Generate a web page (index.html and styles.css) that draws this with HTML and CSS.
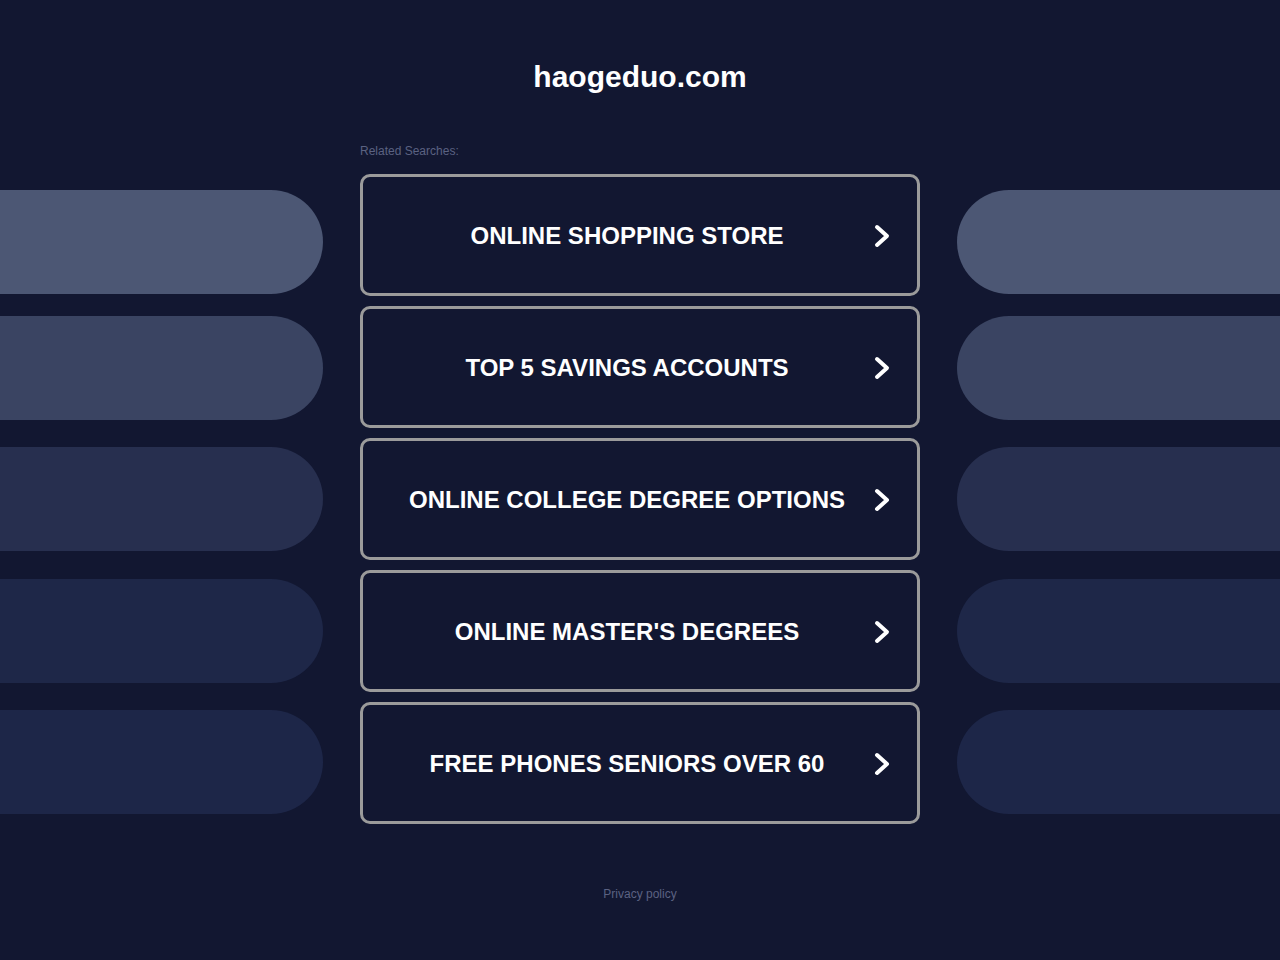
FILE: index.html
```html
<!DOCTYPE html>
<html lang="en">
  <head>
    <meta charset="UTF-8" />
    <meta name="viewport" content="width=device-width, initial-scale=1.0" />
    <title>haogeduo.com</title>
    <link rel="stylesheet" href="styles.css">
  </head>
  <body>
    <h1 class="domain">haogeduo.com</h1>

    <div class="layout">
      <div class="deco deco-left">
        <span class="pill p1"></span>
        <span class="pill p2"></span>
        <span class="pill p3"></span>
        <span class="pill p4"></span>
        <span class="pill p5"></span>
      </div>

      <div class="searches">
        <p class="label">Related Searches:</p>
        <a class="search" href="#">
          <span class="search-text">ONLINE SHOPPING STORE</span>
          <svg class="chevron" viewBox="0 0 18 26"><path d="M4 4 L14 13 L4 22" /></svg>
        </a>
        <a class="search" href="#">
          <span class="search-text">TOP 5 SAVINGS ACCOUNTS</span>
          <svg class="chevron" viewBox="0 0 18 26"><path d="M4 4 L14 13 L4 22" /></svg>
        </a>
        <a class="search" href="#">
          <span class="search-text">ONLINE COLLEGE DEGREE OPTIONS</span>
          <svg class="chevron" viewBox="0 0 18 26"><path d="M4 4 L14 13 L4 22" /></svg>
        </a>
        <a class="search" href="#">
          <span class="search-text">ONLINE MASTER'S DEGREES</span>
          <svg class="chevron" viewBox="0 0 18 26"><path d="M4 4 L14 13 L4 22" /></svg>
        </a>
        <a class="search" href="#">
          <span class="search-text">FREE PHONES SENIORS OVER 60</span>
          <svg class="chevron" viewBox="0 0 18 26"><path d="M4 4 L14 13 L4 22" /></svg>
        </a>
      </div>

      <div class="deco deco-right">
        <span class="pill p1"></span>
        <span class="pill p2"></span>
        <span class="pill p3"></span>
        <span class="pill p4"></span>
        <span class="pill p5"></span>
      </div>
    </div>

    <div class="footer">
      <a class="privacy" href="#">Privacy policy</a>
    </div>
  </body>
</html>
```

FILE: styles.css
```css
body {
  margin: 0;
  padding: 0;
  min-height: 100vh;
  background-color: #121731;
  font-family: "Liberation Sans", Arial, sans-serif;
  color: #fff;
}

.domain {
  margin: 0;
  padding-top: 60px;
  font-size: 30px;
  line-height: 34px;
  font-weight: bold;
  text-align: center;
  color: #fff;
}

.layout {
  display: grid;
  grid-template-columns: 323px 560px 323px;
  column-gap: 37px;
  margin-top: 50px;
}

.deco {
  display: flex;
  flex-direction: column;
  padding-top: 46px;
}

.pill {
  display: block;
  height: 104px;
}

.deco-left .pill {
  border-radius: 0 52px 52px 0;
}

.deco-right .pill {
  border-radius: 52px 0 0 52px;
}

.pill.p1 { background-color: #4c5774; }
.pill.p2 { background-color: #3a4462; margin-top: 22px; }
.pill.p3 { background-color: #272f4f; margin-top: 27px; }
.pill.p4 { background-color: #1e2748; margin-top: 28px; }
.pill.p5 { background-color: #1d2648; margin-top: 27px; }

.searches {
  display: flex;
  flex-direction: column;
  gap: 10px;
}

.label {
  margin: 0 0 6px;
  font-size: 12px;
  line-height: 14px;
  color: #5b6282;
}

.search {
  display: flex;
  align-items: center;
  height: 122px;
  box-sizing: border-box;
  border: 3px solid #9b9b9b;
  border-radius: 10px;
  padding: 2px 26px 0 0;
  text-decoration: none;
  color: #fff;
}

.search-text {
  flex: 1;
  padding-left: 18px;
  text-align: center;
  font-size: 24px;
  font-weight: bold;
}

.chevron {
  width: 18px;
  height: 26px;
  flex-shrink: 0;
}

.chevron path {
  fill: none;
  stroke: #fff;
  stroke-width: 4;
  stroke-linecap: round;
  stroke-linejoin: round;
}

.footer {
  margin-top: 60px;
  text-align: center;
}

.privacy {
  font-size: 12px;
  line-height: 14px;
  color: #5b6282;
  text-decoration: none;
}
```
